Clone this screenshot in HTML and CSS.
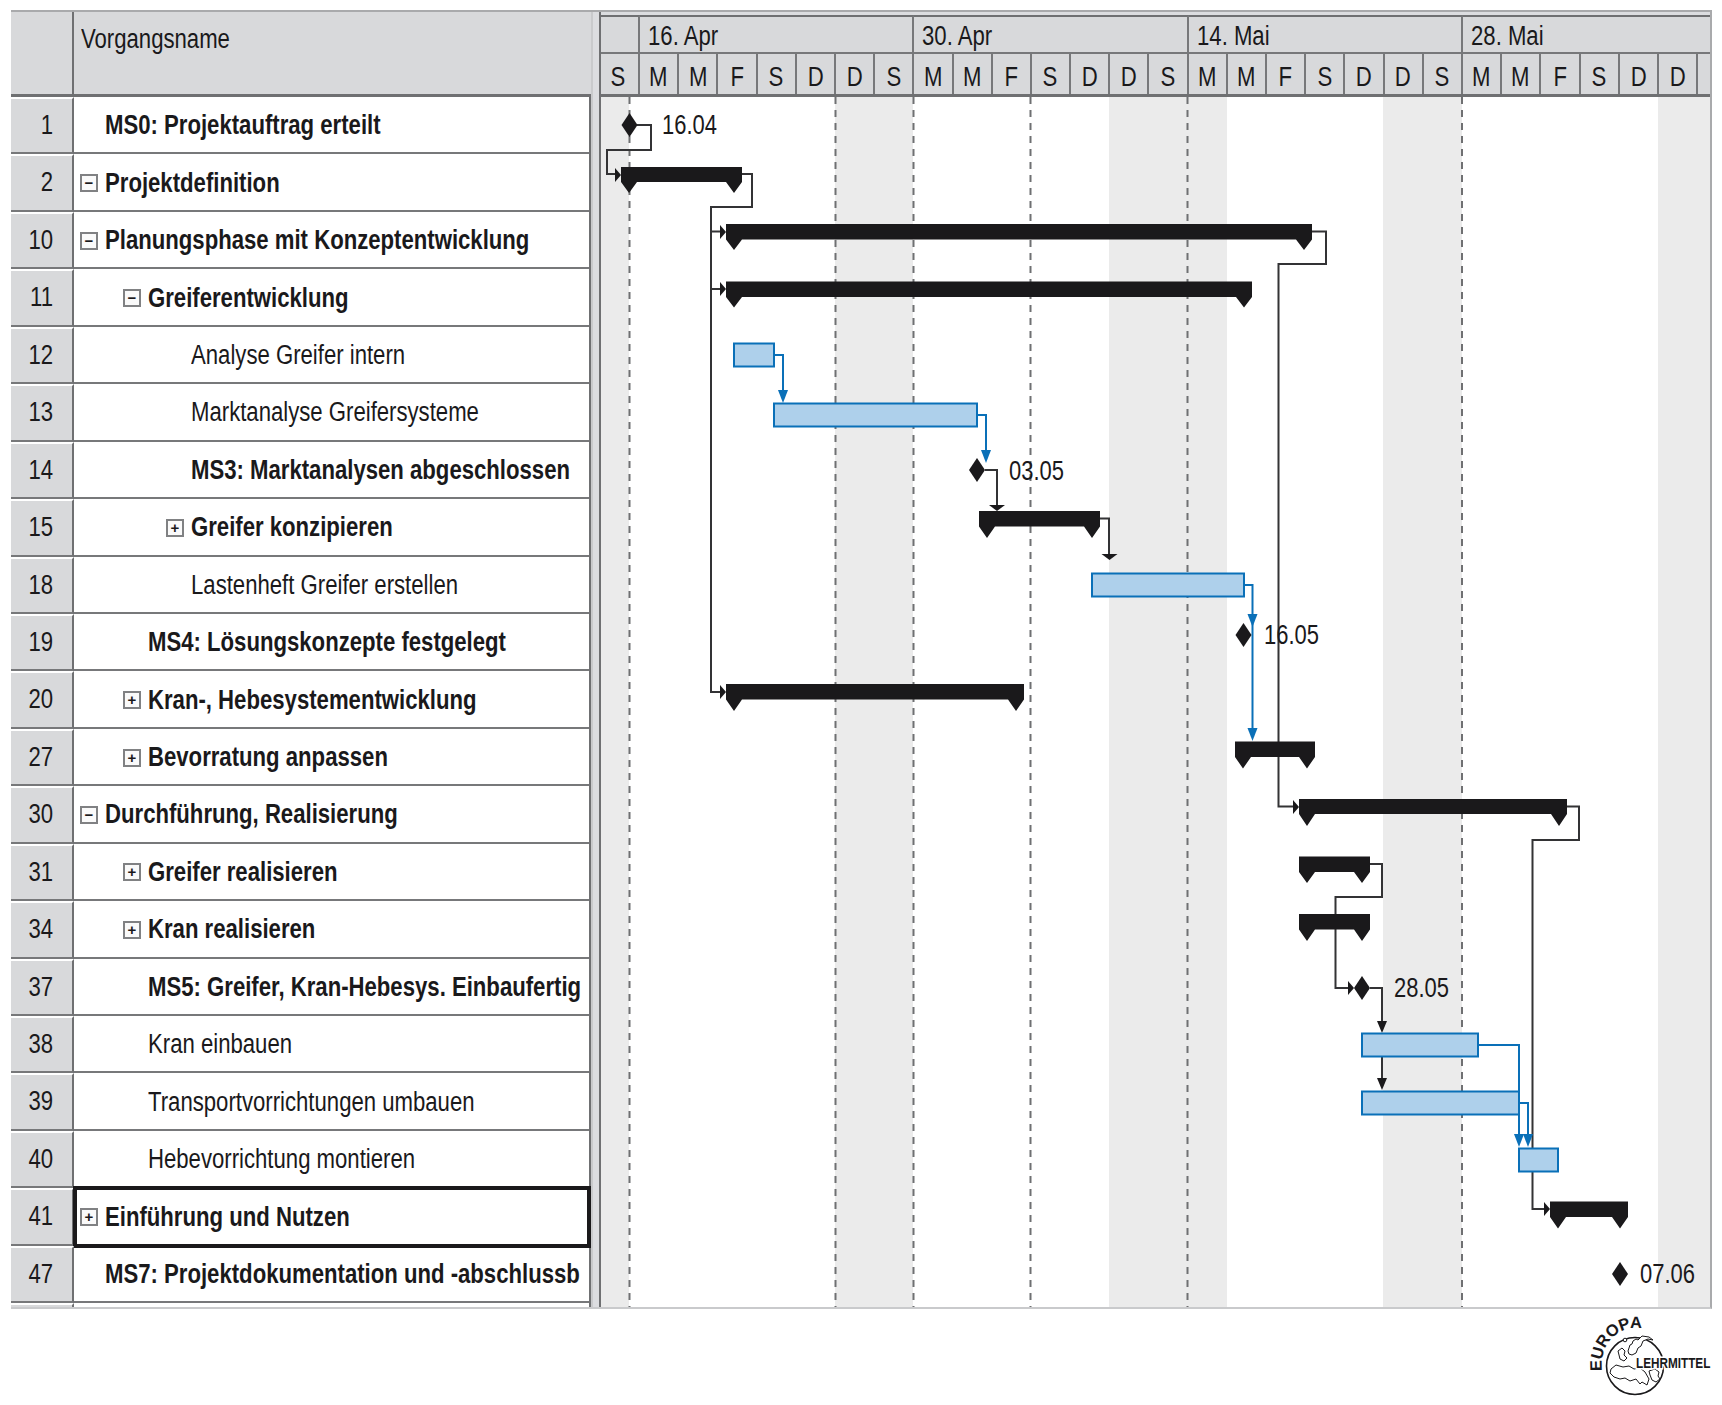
FILE: index.html
```html
<!DOCTYPE html>
<html lang="de">
<head>
<meta charset="utf-8">
<title>Gantt</title>
<link rel="stylesheet" href="styles.css">
</head>
<body>
<div class="page">
<main class="gantt">
<section class="table">
  <header class="thead"><div class="th-id"></div><div class="th-name"><span class="t">Vorgangsname</span></div></header>
  <div class="rows">
    <div class="row b l0"><div class="id"><span class="t">1</span></div><div class="name"><span class="slot"></span><span class="t">MS0: Projektauftrag erteilt</span></div></div>
    <div class="row b l0"><div class="id"><span class="t">2</span></div><div class="name"><span class="slot"><i class="exp">−</i></span><span class="t">Projektdefinition</span></div></div>
    <div class="row b l0"><div class="id"><span class="t">10</span></div><div class="name"><span class="slot"><i class="exp">−</i></span><span class="t">Planungsphase mit Konzeptentwicklung</span></div></div>
    <div class="row b l1"><div class="id"><span class="t">11</span></div><div class="name"><span class="slot"><i class="exp">−</i></span><span class="t">Greiferentwicklung</span></div></div>
    <div class="row l2"><div class="id"><span class="t">12</span></div><div class="name"><span class="slot"></span><span class="t">Analyse Greifer intern</span></div></div>
    <div class="row l2"><div class="id"><span class="t">13</span></div><div class="name"><span class="slot"></span><span class="t">Marktanalyse Greifersysteme</span></div></div>
    <div class="row b l2"><div class="id"><span class="t">14</span></div><div class="name"><span class="slot"></span><span class="t">MS3: Marktanalysen abgeschlossen</span></div></div>
    <div class="row b l2"><div class="id"><span class="t">15</span></div><div class="name"><span class="slot"><i class="exp">+</i></span><span class="t">Greifer konzipieren</span></div></div>
    <div class="row l2"><div class="id"><span class="t">18</span></div><div class="name"><span class="slot"></span><span class="t">Lastenheft Greifer erstellen</span></div></div>
    <div class="row b l1"><div class="id"><span class="t">19</span></div><div class="name"><span class="slot"></span><span class="t">MS4: Lösungskonzepte festgelegt</span></div></div>
    <div class="row b l1"><div class="id"><span class="t">20</span></div><div class="name"><span class="slot"><i class="exp">+</i></span><span class="t">Kran-, Hebesystementwicklung</span></div></div>
    <div class="row b l1"><div class="id"><span class="t">27</span></div><div class="name"><span class="slot"><i class="exp">+</i></span><span class="t">Bevorratung anpassen</span></div></div>
    <div class="row b l0"><div class="id"><span class="t">30</span></div><div class="name"><span class="slot"><i class="exp">−</i></span><span class="t">Durchführung, Realisierung</span></div></div>
    <div class="row b l1"><div class="id"><span class="t">31</span></div><div class="name"><span class="slot"><i class="exp">+</i></span><span class="t">Greifer realisieren</span></div></div>
    <div class="row b l1"><div class="id"><span class="t">34</span></div><div class="name"><span class="slot"><i class="exp">+</i></span><span class="t">Kran realisieren</span></div></div>
    <div class="row b l1"><div class="id"><span class="t">37</span></div><div class="name"><span class="slot"></span><span class="t">MS5: Greifer, Kran-Hebesys. Einbaufertig</span></div></div>
    <div class="row l1"><div class="id"><span class="t">38</span></div><div class="name"><span class="slot"></span><span class="t">Kran einbauen</span></div></div>
    <div class="row l1"><div class="id"><span class="t">39</span></div><div class="name"><span class="slot"></span><span class="t">Transportvorrichtungen umbauen</span></div></div>
    <div class="row l1"><div class="id"><span class="t">40</span></div><div class="name"><span class="slot"></span><span class="t">Hebevorrichtung montieren</span></div></div>
    <div class="row b l0 sel"><div class="id"><span class="t">41</span></div><div class="name"><span class="slot"><i class="exp">+</i></span><span class="t">Einführung und Nutzen</span></div></div>
    <div class="row b l0"><div class="id"><span class="t">47</span></div><div class="name"><span class="slot"></span><span class="t">MS7: Projektdokumentation und -abschlussb</span></div></div>
    <div class="row"><div class="id"></div><div class="name"></div></div>
  </div>
</section>
<div class="split"></div>
<section class="chart">
  <div class="weeks">
    <div class="wk first"></div>
    <div class="wk"><span class="t">16. Apr</span></div>
    <div class="wk"><span class="t">30. Apr</span></div>
    <div class="wk"><span class="t">14. Mai</span></div>
    <div class="wk last"><span class="t">28. Mai</span></div>
  </div>
  <div class="days">
    <div class="d"><span class="t">S</span></div>
    <div class="d"><span class="t">M</span></div><div class="d"><span class="t">M</span></div><div class="d"><span class="t">F</span></div><div class="d"><span class="t">S</span></div><div class="d"><span class="t">D</span></div><div class="d"><span class="t">D</span></div><div class="d"><span class="t">S</span></div>
    <div class="d"><span class="t">M</span></div><div class="d"><span class="t">M</span></div><div class="d"><span class="t">F</span></div><div class="d"><span class="t">S</span></div><div class="d"><span class="t">D</span></div><div class="d"><span class="t">D</span></div><div class="d"><span class="t">S</span></div>
    <div class="d"><span class="t">M</span></div><div class="d"><span class="t">M</span></div><div class="d"><span class="t">F</span></div><div class="d"><span class="t">S</span></div><div class="d"><span class="t">D</span></div><div class="d"><span class="t">D</span></div><div class="d"><span class="t">S</span></div>
    <div class="d"><span class="t">M</span></div><div class="d"><span class="t">M</span></div><div class="d"><span class="t">F</span></div><div class="d"><span class="t">S</span></div><div class="d"><span class="t">D</span></div><div class="d"><span class="t">D</span></div><div class="d"></div>
  </div>
  <svg class="plot" viewBox="601 97 1109 1211" width="1109" height="1211" aria-label="Gantt-Diagramm">
    <defs>
      <path id="ms" d="M0-12 8 0 0 12-8 0Z"/>
      <path id="ar" d="M-6-7 0 0-6 7Z"/>
      <path id="ab" d="M-5-13H5L0 0Z"/>
      <path id="af" d="M-8-6H8L0 0Z"/>
      <path id="abk" d="M-5-12H5L0 0Z"/>
    </defs>
    <g class="shade">
      <rect x="601" y="97" width="28" height="1211"/>
      <rect x="835" y="97" width="78" height="1211"/>
      <rect x="1109" y="97" width="118" height="1211"/>
      <rect x="1383" y="97" width="79" height="1211"/>
      <rect x="1658" y="97" width="52" height="1211"/>
    </g>
    <g class="dash">
      <path d="M629.500 97V1308M835.500 97V1308M913.500 97V1308M1030.500 97V1308M1187.500 97V1308M1462 97V1308"/>
    </g>
    <g class="link">
      <path d="M637 125H651V150H607V174H618"/>
      <path d="M742 174H752V207H711V692H722M711 231.500H722M711 289H722"/>
      <path d="M1312 231.500H1326V264H1278.500V806.500H1295"/>
      <path d="M985 470H997V507"/>
      <path d="M1100 518.500H1109V556"/>
      <path d="M1567 806.500H1579V840H1532.500V1209H1546"/>
      <path d="M1370 864H1382V897H1335.500V988H1350"/>
      <path d="M1370 988H1382V1024"/>
      <path d="M1382 1057V1080"/>
    </g>
    <g class="heads">
      <use href="#ar" x="621" y="175"/>
      <use href="#ar" x="726" y="232"/>
      <use href="#ar" x="726" y="289"/>
      <use href="#ar" x="726" y="692"/>
      <use href="#ar" x="1299" y="807"/>
      <use href="#ar" x="1550" y="1209"/>
      <use href="#ar" x="1354" y="988"/>
      <use href="#af" x="997" y="511"/>
      <use href="#af" x="1109.500" y="560"/>
      <use href="#abk" x="1382" y="1033"/>
      <use href="#abk" x="1382" y="1090"/>
    </g>
    <g class="sum">
      <path d="M621 167H742V182L734 193 726 182H637L629 193 621 182Z"/>
      <path d="M726 224H1312V239.500L1304 250 1296 239.500H742L734 250 726 239.500Z"/>
      <path d="M726 281.500H1252V297L1244 307.500 1236 297H742L734 307.500 726 297Z"/>
      <path d="M979 511H1100V526.500L1092 538 1084 526.500H995L987 538 979 526.500Z"/>
      <path d="M726 684H1024V699.500L1016 711 1008 699.500H742L734 711 726 699.500Z"/>
      <path d="M1235 741.500H1315V757L1307 768.500 1299 757H1251L1243 768.500 1235 757Z"/>
      <path d="M1299 799H1567V814L1559 826 1551 814H1315L1307 826 1299 814Z"/>
      <path d="M1299 856.500H1370V872L1362 883 1354 872H1315L1307 883 1299 872Z"/>
      <path d="M1299 914H1370V929.500L1362 941 1354 929.500H1315L1307 941 1299 929.500Z"/>
      <path d="M1550 1201.500H1628V1217L1620 1228.500 1612 1217H1566L1558 1228.500 1550 1217Z"/>
    </g>
    <g class="task">
      <rect x="734" y="343.500" width="40" height="23"/>
      <rect x="774" y="403.500" width="203" height="23"/>
      <rect x="1092" y="573.500" width="152" height="23"/>
      <rect x="1362" y="1033.500" width="116" height="23"/>
      <rect x="1362" y="1091.500" width="157" height="23"/>
      <rect x="1519" y="1148.500" width="39" height="23"/>
    </g>
    <g class="blue">
      <path d="M774 355H783V390"/>
      <path d="M977 415H986V452"/>
      <path d="M1244 585H1252.500V730"/>
      <path d="M1478 1045H1519V1137"/>
      <path d="M1519 1103H1528V1137"/>
    </g>
    <g class="bhead">
      <use href="#ab" x="783" y="403"/>
      <use href="#ab" x="986" y="463"/>
      <use href="#ab" x="1252.500" y="627"/>
      <use href="#ab" x="1252.500" y="741"/>
      <use href="#ab" x="1519" y="1147"/>
      <use href="#ab" x="1528" y="1147"/>
    </g>
    <g class="mile">
      <use href="#ms" x="629.500" y="125"/>
      <use href="#ms" x="977" y="470"/>
      <use href="#ms" x="1243.500" y="635"/>
      <use href="#ms" x="1362" y="988"/>
      <use href="#ms" x="1620" y="1274"/>
    </g>
    <g class="lbl">
      <text x="662" y="134" textLength="55" lengthAdjust="spacingAndGlyphs">16.04</text>
      <text x="1009" y="480" textLength="55" lengthAdjust="spacingAndGlyphs">03.05</text>
      <text x="1264" y="644" textLength="55" lengthAdjust="spacingAndGlyphs">16.05</text>
      <text x="1394" y="997" textLength="55" lengthAdjust="spacingAndGlyphs">28.05</text>
      <text x="1640" y="1283" textLength="55" lengthAdjust="spacingAndGlyphs">07.06</text>
    </g>
  </svg>
</section>
</main>
<footer class="foot">
  <svg class="logo" viewBox="-10 -6 140 92" width="140" height="92" aria-label="Europa Lehrmittel">
    <defs><path id="arc" d="M11 53A34 37 0 0 1 58 13"/></defs>
    <circle class="globe" cx="44" cy="48" r="28.500"/>
    <g class="land">
      <path d="M37 33l2-6 2-1 1-3 3-2 2 1 4-4 7 1 4 3-5-1-5 2-2 5-3 2-2 5-4 2-3-1z"/>
      <path d="M27 33l4-3 3 3-1 4 3 3-3 3-4-2-1-4z"/>
      <circle cx="34" cy="22" r="1.800"/>
      <path d="M20 51l5-4 7 2 6-1 5 3 6-1 5 4 4 7-2 6-5-3-2 2-4-5-6 2-5-3-5 1-6-2-4-4z"/>
      <path d="M58 53l6-2 4 3-1 4 2 3-4 3-4-2-2-5z"/>
    </g>
    <text class="arc-t"><textPath href="#arc">EUROPA</textPath></text>
    <text class="lehr" x="45" y="50">LEHRMITTEL</text>
  </svg>
</footer>
</div>
</body>
</html>
```
FILE: styles.css
```css
* { box-sizing: border-box; }
html, body { margin: 0; padding: 0; background: #fff; }
body { font-family: "Liberation Sans", Arial, sans-serif; color: #1a191b; }
.page { width: 1722px; height: 1405px; padding: 10px 0 0 11px; overflow: hidden; }
.gantt { display: flex; width: 1701px; height: 1299px; border-top: 2px solid #a9aaac; border-bottom: 2px solid #c9cacc; border-right: 2px solid #a9aaac; overflow: hidden; }

/* The reference uses a condensed grotesque: regular Liberation Sans squeezed to the Arial Narrow ratio */
.t { display: inline-block; white-space: nowrap; transform: scaleX(.82); transform-origin: 0 50%; }
.id .t { transform-origin: 100% 50%; }
.d .t { transform-origin: 50% 50%; }

.table { width: 580px; flex: none; display: flex; flex-direction: column; }
.thead { display: flex; height: 85px; background: #d8d9db; border-bottom: 3px solid #6f7072; flex: none; }
.th-id { width: 63px; border-right: 2px solid #6f7072; }
.th-name { flex: 1; padding: 12px 0 0 7px; font-size: 27px; line-height: 30px; }
.rows { display: grid; grid-template-columns: minmax(0, 1fr); grid-auto-rows: 57.45px; border-right: 2px solid #6f7072; }
.row { display: flex; position: relative; font-size: 27px; min-width: 0; }
.row.b { font-weight: 700; }
.id { width: 63px; flex: none; background: #d8d9db; border-right: 2px solid #6f7072; border-top: 2px solid #fff; border-bottom: 2px solid #77787a; text-align: right; padding-right: 19px; line-height: 53px; font-weight: 400; }
.name { flex: 1; min-width: 0; display: flex; align-items: center; white-space: nowrap; overflow: hidden; border-bottom: 2px solid #77787a; padding: 2px 0 0 6px; }
.l1 .name { padding-left: 49px; }
.l2 .name { padding-left: 92px; }
.slot { width: 25px; flex: none; display: flex; align-items: center; }
.exp { width: 18px; height: 18px; border: 2px solid #808183; background: #fafafa; display: flex; align-items: center; justify-content: center; font: 700 15px/14px "Liberation Sans", sans-serif; color: #1a191b; }
.sel::after { content: ""; position: absolute; left: 62px; right: -2px; top: -2px; bottom: -2px; border: 4px solid #1a191b; }

.split { width: 8px; flex: none; background: #dcdde0; border-left: 2px solid #c9cacc; }
.chart { flex: 1; min-width: 0; background: #fff; border-left: 2px solid #6f7072; display: flex; flex-direction: column; }
.weeks { display: flex; height: 42px; padding-top: 3px; background: #dcdde0; flex: none; }
.wk { width: 274.3px; flex: none; background: #d8d9db; border-top: 2px solid #6f7072; border-right: 2px solid #77787a; border-bottom: 2px solid #77787a; padding: 0 0 0 8px; font-size: 27px; line-height: 38px; }
.wk.first { width: 39px; }
.wk.last { flex: 1; border-right: 0; }
.days { display: flex; height: 43px; background: #d8d9db; border-bottom: 3px solid #6f7072; flex: none; overflow: hidden; }
.d { width: 39.2px; flex: none; border-right: 2px solid #77787a; text-align: center; font-size: 27px; line-height: 47px; }
.d:first-child { width: 39px; padding-right: 2px; }
.plot { display: block; flex: none; }

.shade rect { fill: #ebebeb; }
.dash path { fill: none; stroke: #6f7072; stroke-width: 2; stroke-dasharray: 7 6; }
.link path { fill: none; stroke: #333335; stroke-width: 2; }
.heads, .sum, .mile { fill: #1a191b; }
.task rect { fill: #aed0eb; stroke: #0a70b8; stroke-width: 2; }
.blue path { fill: none; stroke: #0a70b8; stroke-width: 2; }
.bhead { fill: #0a70b8; }
.lbl text { font-size: 27px; fill: #1a191b; }

.foot { display: flex; justify-content: flex-end; padding: 3px 1px 0 0; }
.globe { fill: #fff; stroke: #1a191b; stroke-width: 1.6; }
.land { fill: #fff; stroke: #1a191b; stroke-width: 1; }
.arc-t { font: 700 16.500px "Liberation Sans", sans-serif; letter-spacing: -.3px; fill: #1a191b; }
.lehr { font: 700 14px "Liberation Sans", sans-serif; fill: #1a191b; stroke: #fff; stroke-width: 3px; paint-order: stroke; transform-box: fill-box; transform-origin: 0 50%; transform: scaleX(.84); }
```
